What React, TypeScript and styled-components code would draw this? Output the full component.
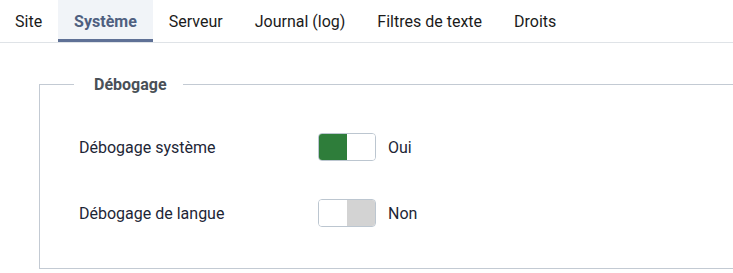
import React from "react";
import styled, { createGlobalStyle } from "styled-components";

const GlobalStyle = createGlobalStyle`
  html, body {
    margin: 0;
    padding: 0;
    background: #ffffff;
    font-family: Roboto, "Liberation Sans", sans-serif;
    overflow: hidden;
  }
`;

const tabs = ["Site", "Système", "Serveur", "Journal (log)", "Filtres de texte", "Droits"];

const options = [
  { label: "Débogage système", on: true },
  { label: "Débogage de langue", on: false },
];

export default function App() {
  return (
    <>
      <GlobalStyle />
      <TabBar>
        {tabs.map((t, i) => (
          <Tab key={t} active={i === 1}>
            {t}
          </Tab>
        ))}
      </TabBar>
      <Content>
        <Fieldset>
          <Legend>Débogage</Legend>
          <Rows>
            {options.map((o) => (
              <Row key={o.label}>
                <Label>{o.label}</Label>
                <Switch>
                  <SwitchHalf fill={o.on ? "#2e7d3a" : "#ffffff"} />
                  <SwitchHalf fill={o.on ? "#ffffff" : "#d3d3d3"} />
                </Switch>
                <State>{o.on ? "Oui" : "Non"}</State>
              </Row>
            ))}
          </Rows>
        </Fieldset>
      </Content>
    </>
  );
}

const TabBar = styled.div`
  display: flex;
  height: 42px;
  border-bottom: 1px solid #dfe3e7;
  padding-left: 0;
`;

const Tab = styled.div<{ active?: boolean }>`
  display: flex;
  align-items: center;
  padding: 0 16px;
  font-size: 16px;
  color: ${(p) => (p.active ? "#4f5f80" : "#1b1b1b")};
  font-weight: ${(p) => (p.active ? 700 : 400)};
  background: ${(p) => (p.active ? "#f1f4f8" : "transparent")};
  box-shadow: ${(p) => (p.active ? "inset 0 -3px 0 #5f7196" : "none")};

  &:first-child {
    padding-left: 15px;
  }
`;

const Content = styled.div`
  padding: 32px 0 0 39px;
  overflow: hidden;
`;

const Fieldset = styled.fieldset`
  margin: 0 -40px 0 0;
  padding: 0;
  border: 1px solid #c3cad3;
  border-right: none;
`;

const Legend = styled.legend`
  margin-left: 34px;
  padding: 0 16px 0 20px;
  font-size: 16px;
  font-weight: 700;
  color: #495057;
`;

const Rows = styled.div`
  padding: 20px 0 22px 39px;
`;

const Row = styled.div`
  display: flex;
  align-items: center;
  height: 66px;
`;

const Label = styled.div`
  width: 239px;
  font-size: 16px;
  color: #1d2636;
`;

const Switch = styled.div`
  display: flex;
  width: 56px;
  height: 26px;
  border: 1px solid #bcc6d0;
  border-radius: 4px;
  overflow: hidden;
`;

const SwitchHalf = styled.div<{ fill: string }>`
  flex: 1;
  background: ${(p) => p.fill};
`;

const State = styled.div`
  margin-left: 12px;
  font-size: 16px;
  color: #1d2636;
`;
